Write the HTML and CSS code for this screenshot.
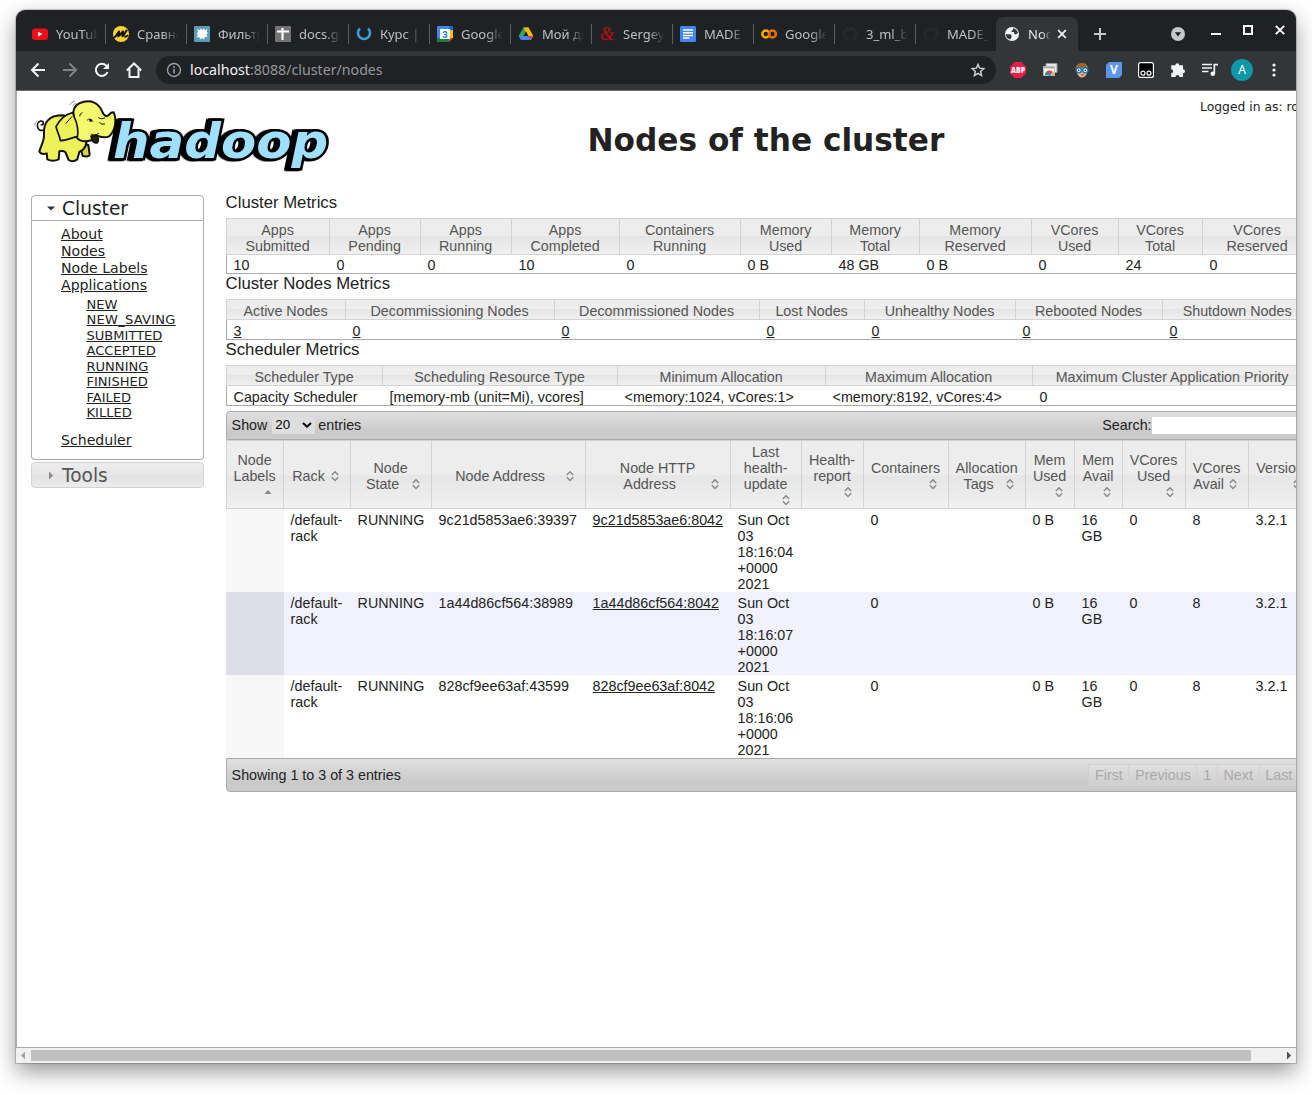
FILE: index.html
```html
<!DOCTYPE html>
<html lang="en">
<head>
<meta charset="utf-8">
<title>Nodes of the cluster</title>
<link rel="stylesheet" href="styles.css">
</head>
<body>
<div class="window">
  <div class="tabstrip">
    <div class="tab"><svg viewBox="0 0 16 16"><rect y="2.5" width="16" height="11.5" rx="3" fill="#f00d15"/><path d="M6 5.8v4.6l4.4-2.3z" fill="#fff"/></svg><span class="label">YouTube</span></div>
    <div class="tab"><svg viewBox="0 0 16 16"><circle cx="8" cy="8" r="8" fill="#fcd535"/><path d="M.8 11.500C3 11.500 4.500 6.500 6 5.500C7 6 4.500 9.500 5.300 10.300C7 10 8.500 6 10 5.300C11 6 8.500 9.500 9.500 10.300C11 10 12 6.500 14 3.800M11.500 10.500C13 11 14.300 10 15 9" fill="none" stroke="#111" stroke-width="2"/></svg><span class="label">Сравнение</span></div>
    <div class="tab"><svg viewBox="0 0 16 16"><rect width="16" height="16" rx="1" fill="#5b9bb8"/><path d="M3 3l2.500 1L7 2.500 8.500 4 10 2l.7 2.200L13.500 3l-1 2.700L14 7l-1.500 1.300L13.500 11l-2.600-.2L10 13.500 8 12l-2 1.500-.6-2.600-3 .6L4 9 2.500 7.500 4 6z" fill="#fff"/></svg><span class="label">Фильтры</span></div>
    <div class="tab"><svg viewBox="0 0 16 16"><rect width="16" height="16" rx="1" fill="#737373"/><path d="M2 5.500h12M7.500 2v12" stroke="#fff" stroke-width="2.200"/></svg><span class="label">docs.google</span></div>
    <div class="tab"><svg viewBox="0 0 16 16"><path d="M4 2.500A6 6 0 1 0 12 2.500" fill="none" stroke="#3c9bd6" stroke-width="2.600"/></svg><span class="label">Курс | ML</span></div>
    <div class="tab"><svg viewBox="0 0 16 16"><path d="M0 1a1 1 0 0 1 1-1h11v16H0z" fill="#4285f4"/><path d="M12 0h3a1 1 0 0 1 1 1v3h-4z" fill="#1967d2"/><path d="M12 4h4v8h-4z" fill="#fbbc04"/><path d="M0 12h12v4H1a1 1 0 0 1-1-1z" fill="#188038"/><path d="M12 12h4l-4 4z" fill="#ea4335"/><path d="M3 3h10v10H3z" fill="#fff"/><text x="8" y="11.500" text-anchor="middle" font-family="Roboto" font-size="9.500" font-weight="700" fill="#1a73e8">3</text></svg><span class="label">Google Cal</span></div>
    <div class="tab"><svg viewBox="0 0 16 16"><path d="M5.500 1.500h5L8 6 3.200 14 .7 10z" fill="#34a853"/><path d="M5.500 1.500h5L15.300 10h-5z" fill="#fbbc04"/><path d="M.7 10H15.300L12.800 14H3.200z" fill="#4285f4"/><path d="M10.300 10h5L12.800 14z" fill="#ea4335"/><path d="M8 5.500l2.500 4.500h-5z" fill="#202124"/></svg><span class="label">Мой диск</span></div>
    <div class="tab"><svg viewBox="0 0 16 16"><text x="8" y="13.500" text-anchor="middle" font-family="Liberation Serif" font-size="18" font-style="italic" font-weight="400" stroke="#a3121d" stroke-width=".4" fill="#a3121d">&amp;</text></svg><span class="label">Sergey N</span></div>
    <div class="tab"><svg viewBox="0 0 16 16"><rect width="16" height="16" rx="1.500" fill="#4285f4"/><path d="M3 4h10M3 6.700h10M3 9.400h10M3 12.100h6.500" stroke="#fff" stroke-width="1.500"/></svg><span class="label">MADE - doc</span></div>
    <div class="tab"><svg viewBox="0 0 16 16"><circle cx="4.800" cy="8" r="3.500" fill="none" stroke="#f9ab00" stroke-width="2.500"/><circle cx="11.400" cy="8" r="3.500" fill="none" stroke="#e8710a" stroke-width="2.500"/></svg><span class="label">Google Colab</span></div>
    <div class="tab"><svg viewBox="0 0 16 16"><circle cx="8" cy="8" r="7.600" fill="#24292e"/><path d="M6 16v-3.500C2.500 11.500 3 7 4.200 6V3.800L6.300 5h3.400l2.100-1.200V6c1.200 1 1.700 5.500-1.800 6.500V16z" fill="#202124"/></svg><span class="label">3_ml_big</span></div>
    <div class="tab last"><svg viewBox="0 0 16 16"><circle cx="8" cy="8" r="7.600" fill="#24292e"/><path d="M6 16v-3.500C2.500 11.500 3 7 4.200 6V3.800L6.300 5h3.400l2.100-1.200V6c1.200 1 1.700 5.500-1.800 6.500V16z" fill="#202124"/></svg><span class="label">MADE_2021</span></div>
    <div class="tab active"><svg viewBox="0 0 16 16"><circle cx="8" cy="8" r="7" fill="#f1f3f4"/><path d="M1.800 8.300H5.500Q8 8.500 7.500 11L6.300 13.500Q2 12.500 1.800 8.300zM9 2.200Q13 3 14 7L11.500 8.500Q9.500 7.500 10 6H7.500Q7 4 9 4z" fill="#35363a"/></svg><span class="label">Nodes of</span><svg class="tab-close" viewBox="0 0 16 16"><path d="M4.200 4.200l7.600 7.600m0-7.600l-7.600 7.600" stroke="#f1f3f4" stroke-width="1.800"/></svg></div>
    <svg class="newtab" viewBox="0 0 16 16"><path d="M8 2v12M2 8h12" stroke="#c6c9cc" stroke-width="2"/></svg>
    <div class="controls">
      <svg viewBox="0 0 16 16" class="low"><circle cx="8" cy="8" r="7" fill="#c6c8cb"/><path d="M4.800 6.200h6.400L8 10.500z" fill="#202124"/></svg>
      <svg viewBox="0 0 16 16"><path d="M3 12h10" stroke="#fff" stroke-width="2"/></svg>
      <svg viewBox="0 0 16 16"><path d="M4 4h8v8H4z" fill="none" stroke="#fff" stroke-width="2"/></svg>
      <svg viewBox="0 0 16 16"><path d="M3.800 3.800l8.400 8.400m0-8.400l-8.400 8.400" stroke="#fff" stroke-width="1.900"/></svg>
    </div>
  </div>
  <div class="toolbar">
    <span class="btn"><svg viewBox="0 0 16 16"><path d="M15 8H2.500M8.500 1.500L2 8l6.500 6.500" fill="none" stroke="#f1f3f4" stroke-width="2"/></svg></span>
    <span class="btn"><svg viewBox="0 0 16 16"><path d="M1 8h12.500M7.500 1.500L14 8l-6.500 6.500" fill="none" stroke="#818487" stroke-width="2"/></svg></span>
    <span class="btn"><svg viewBox="0 0 16 16"><path d="M13.500 10A6 6 0 1 1 12.300 3.800L14 5.500" fill="none" stroke="#f1f3f4" stroke-width="2"/><path d="M15 1v6H9z" fill="#f1f3f4"/></svg></span>
    <span class="btn"><svg viewBox="0 0 16 16"><path d="M.8 8.500L8 1.500l7.200 7M3.500 7v8h9V7" fill="none" stroke="#f1f3f4" stroke-width="2"/></svg></span>
    <div class="omnibox">
      <svg viewBox="0 0 16 16"><circle cx="8" cy="8" r="6.500" fill="none" stroke="#9aa0a6" stroke-width="1.400"/><path d="M8 7v4.500M8 4.300v1.600" stroke="#9aa0a6" stroke-width="1.600"/></svg>
      <span class="url"><b>localhost</b>:8088/cluster/nodes</span>
      <svg viewBox="0 0 16 16"><path d="M8 2.300l1.600 3.900 4.200.4-3.200 2.800 1 4.100L8 11.300l-3.600 2.200 1-4.100L2.200 6.600l4.200-.4z" fill="none" stroke="#d0d3d6" stroke-width="1.400"/></svg>
    </div>
    <span class="btn"><svg viewBox="0 0 16 16"><path d="M4.700 0h6.600L16 4.700v6.600L11.300 16H4.700L0 11.300V4.700z" fill="#ec1e45"/><text x="1" y="10.900" font-family="Open Sans" font-size="8" font-weight="800" fill="#fff" textLength="14" lengthAdjust="spacingAndGlyphs">ABP</text></svg></span>
    <span class="btn"><svg viewBox="0 0 16 16"><path d="M4 1.500h11v9H4z" fill="#e8e8e8" stroke="#999"/><path d="M1.500 4.500h11v9h-11z" fill="#fafafa" stroke="#bbb"/><path d="M2 5h10v1.500H2z" fill="#aaa"/><path d="M3 13a4.500 4.500 0 0 1 9 0z" fill="#e44134"/><path d="M3 13a4.500 4.500 0 0 1 2-3.500L7.500 13z" fill="#26a35a"/><path d="M12 13a4.500 4.500 0 0 0-1.500-3L8 13z" fill="#fbc116"/><circle cx="7.500" cy="12.200" r="1.700" fill="#4285f4"/></svg></span>
    <span class="btn"><svg viewBox="0 0 16 16"><path d="M1.500 8C1 3 4 1 8 1s6.500 2 6 7z" fill="#a0651f"/><path d="M3 6h10v5c-1 3-3 4.500-5 4.500S4 14 3 11z" fill="#f0b184"/><path d="M7 13h3" stroke="#a33"/><circle cx="4.800" cy="8.200" r="2.500" fill="#fff" stroke="#1979ca" stroke-width="1.500"/><circle cx="11.200" cy="8.200" r="2.500" fill="#fff" stroke="#1979ca" stroke-width="1.500"/><circle cx="4.800" cy="8.200" r=".7"/><circle cx="11.200" cy="8.200" r=".7"/></svg></span>
    <span class="btn"><svg viewBox="0 0 16 16"><path d="M3 0h13v13l-3 3H0V3z" fill="#5b97e8"/><text x="8" y="12.200" text-anchor="middle" font-family="Open Sans" font-size="12" font-weight="700" fill="#fff">V</text></svg></span>
    <span class="btn"><svg viewBox="0 0 16 16"><rect x=".6" y=".6" width="14.800" height="14.800" rx="2" fill="#000" stroke="#fff" stroke-width="1.200"/><circle cx="5" cy="11.200" r="2" fill="none" stroke="#fff" stroke-width="1.200"/><circle cx="11" cy="11.200" r="2" fill="none" stroke="#fff" stroke-width="1.200"/></svg></span>
    <span class="btn"><svg viewBox="0 0 16 16"><path d="M1.200 3.200h4.100a2 2 0 1 1 4 0H13v4a2 2 0 1 1 0 4V15H9.500a2 2 0 1 0-4 0H1.200v-3.800a2 2 0 1 0 0-4z" fill="#f1f3f4"/></svg></span>
    <span class="btn"><svg viewBox="0 0 16 16"><path d="M0 2.500h10M0 6h10M0 9.500h6.500" stroke="#f1f3f4" stroke-width="1.500"/><path d="M12.300 12V2.700H16" fill="none" stroke="#f1f3f4" stroke-width="1.700"/><circle cx="10.800" cy="11.800" r="2.300" fill="#f1f3f4"/></svg></span>
    <span class="btn"><span class="avatar">A</span></span>
    <span class="btn"><svg viewBox="0 0 16 16"><circle cx="8" cy="3" r="1.600" fill="#f1f3f4"/><circle cx="8" cy="8" r="1.600" fill="#f1f3f4"/><circle cx="8" cy="13" r="1.600" fill="#f1f3f4"/></svg></span>
  </div>

  <div class="page">
    <div class="header">
      <svg class="logo" viewBox="3 3 987 267">
        <g stroke="#111" stroke-width="6" stroke-linejoin="round" stroke-linecap="round">
          <path d="M84 120C62 128 58 98 74 93C84 92 84 104 76 105" fill="none" stroke-width="5"/>
          <path d="M190 160L200 198Q220 202 221 194L217 165z" fill="#d3d83b"/>
          <path d="M140 76C100 76 82 96 84 130C86 150 78 160 70 184Q76 196 92 190L94 208Q110 216 128 208L130 184Q142 182 148 186L158 210Q170 218 184 208L190 186C208 178 214 160 210 146L200 90z" fill="#edf15a"/>
          <path d="M172 66C176 34 226 22 250 50C260 60 258 74 270 78C282 80 278 66 293 67C302 88 300 122 278 140C264 146 252 140 238 136L228 150C200 160 180 150 178 130z" fill="#f4f86c"/>
          <path d="M225 138Q228 162 244 158Q250 150 243 137z" fill="#2b240a" stroke-width="5"/>
          <path d="M170 68C146 74 134 86 120 110C124 128 132 138 133 152C150 152 170 142 184 140C188 126 184 100 176 84z" fill="#edf15a" stroke-width="5"/>
          <path d="M150 100Q160 88 168 80M191 78Q192 70 198 68M214 90Q222 82 230 94M248 84Q256 90 266 84M251 98Q257 106 266 102M226 132Q236 140 248 130" fill="none" stroke-width="3"/>
          <path d="M162 44Q166 34 176 34M170 48Q172 42 180 40M56 106Q56 96 62 94" fill="none" stroke="#666" stroke-width="2"/>
          <ellipse cx="224" cy="91" rx="4" ry="5" fill="#111" stroke="none"/>
        </g>
        <text class="wordmark" x="291" y="204" textLength="646" lengthAdjust="spacingAndGlyphs">hadoop</text>
      </svg>
      <h1>Nodes of the cluster</h1>
      <div class="user">Logged in as: root</div>
    </div>
    <div class="main">
      <div class="nav">
        <h3 class="nav-head"><i class="tri down"></i>Cluster</h3>
        <div class="nav-body">
          <a>About</a><a>Nodes</a><a>Node Labels</a><a>Applications</a>
          <div class="sub"><a>NEW</a><a class="wide">NEW_SAVING</a><a>SUBMITTED</a><a>ACCEPTED</a><a>RUNNING</a><a>FINISHED</a><a>FAILED</a><a>KILLED</a></div>
          <a>Scheduler</a>
        </div>
        <h3 class="nav-head closed"><i class="tri right"></i>Tools</h3>
      </div>
      <div class="content">
        <h3>Cluster Metrics</h3>
        <table class="metrics tall">
          <colgroup><col class="w104"><col class="w91"><col class="w91"><col class="w108"><col class="w121"><col class="w91"><col class="w88"><col class="w112"><col class="w87"><col class="w84"><col></colgroup>
          <tr><th>Apps<br>Submitted</th><th>Apps<br>Pending</th><th>Apps<br>Running</th><th>Apps<br>Completed</th><th>Containers<br>Running</th><th>Memory<br>Used</th><th>Memory<br>Total</th><th>Memory<br>Reserved</th><th>VCores<br>Used</th><th>VCores<br>Total</th><th>VCores<br>Reserved</th></tr>
          <tr><td>10</td><td>0</td><td>0</td><td>10</td><td>0</td><td>0 B</td><td>48 GB</td><td>0 B</td><td>0</td><td>24</td><td>0</td></tr>
        </table>
        <h3>Cluster Nodes Metrics</h3>
        <table class="metrics">
          <colgroup><col class="w120"><col class="w209"><col class="w205"><col class="w105"><col class="w151"><col class="w147"><col></colgroup>
          <tr><th>Active Nodes</th><th>Decommissioning Nodes</th><th>Decommissioned Nodes</th><th>Lost Nodes</th><th>Unhealthy Nodes</th><th>Rebooted Nodes</th><th>Shutdown Nodes</th></tr>
          <tr><td><a>3</a></td><td><a>0</a></td><td><a>0</a></td><td><a>0</a></td><td><a>0</a></td><td><a>0</a></td><td><a>0</a></td></tr>
        </table>
        <h3>Scheduler Metrics</h3>
        <table class="metrics">
          <colgroup><col class="w157"><col class="w235"><col class="w208"><col class="w207"><col></colgroup>
          <tr><th>Scheduler Type</th><th>Scheduling Resource Type</th><th>Minimum Allocation</th><th>Maximum Allocation</th><th>Maximum Cluster Application Priority</th></tr>
          <tr><td>Capacity Scheduler</td><td>[memory-mb (unit=Mi), vcores]</td><td>&lt;memory:1024, vCores:1&gt;</td><td>&lt;memory:8192, vCores:4&gt;</td><td>0</td></tr>
        </table>
        <div class="bar top">
          <span>Show</span>
          <span class="select">20<svg viewBox="0 0 10 6"><path d="M1 1l4 3.700L9 1" fill="none" stroke="#000" stroke-width="2"/></svg></span>
          <span>entries</span>
          <span class="search">Search:</span><span class="input"></span>
        </div>
        <svg class="defs"><symbol id="sort" viewBox="0 0 16 16"><path d="M4.800 7L8 3.800 11.200 7M4.800 9.300L8 12.500l3.200-3.200" fill="none" stroke="#888" stroke-width="1.400"/></symbol></svg>
        <table class="nodes">
          <colgroup><col class="w58"><col class="w67"><col class="w81"><col class="w154"><col class="w145"><col class="w71"><col class="w62"><col class="w85"><col class="w77"><col class="w49"><col class="w48"><col class="w63"><col class="w63"><col></colgroup>
          <tr>
            <th><div>Node<br>Labels<svg viewBox="0 0 16 16"><path d="M4.500 10h7L8 6z" fill="#888"/></svg></div></th>
            <th><div>Rack<svg><use href="#sort"/></svg></div></th>
            <th><div>Node<br>State<svg><use href="#sort"/></svg></div></th>
            <th><div>Node Address<svg><use href="#sort"/></svg></div></th>
            <th><div>Node HTTP<br>Address<svg><use href="#sort"/></svg></div></th>
            <th><div>Last<br>health-<br>update<svg><use href="#sort"/></svg></div></th>
            <th><div>Health-<br>report<br><svg><use href="#sort"/></svg></div></th>
            <th><div>Containers<svg><use href="#sort"/></svg></div></th>
            <th><div>Allocation<br>Tags<svg><use href="#sort"/></svg></div></th>
            <th><div>Mem<br>Used<svg><use href="#sort"/></svg></div></th>
            <th><div>Mem<br>Avail<svg><use href="#sort"/></svg></div></th>
            <th><div>VCores<br>Used<br><svg><use href="#sort"/></svg></div></th>
            <th><div>VCores<br>Avail<svg><use href="#sort"/></svg></div></th>
            <th><div>Version<svg><use href="#sort"/></svg></div></th>
          </tr>
          <tr><td></td><td>/default-<br>rack</td><td>RUNNING</td><td>9c21d5853ae6:39397</td><td><a>9c21d5853ae6:8042</a></td><td>Sun Oct<br>03<br>18:16:04<br>+0000<br>2021</td><td></td><td>0</td><td></td><td>0 B</td><td>16<br>GB</td><td>0</td><td>8</td><td>3.2.1</td></tr>
          <tr class="even"><td></td><td>/default-<br>rack</td><td>RUNNING</td><td>1a44d86cf564:38989</td><td><a>1a44d86cf564:8042</a></td><td>Sun Oct<br>03<br>18:16:07<br>+0000<br>2021</td><td></td><td>0</td><td></td><td>0 B</td><td>16<br>GB</td><td>0</td><td>8</td><td>3.2.1</td></tr>
          <tr><td></td><td>/default-<br>rack</td><td>RUNNING</td><td>828cf9ee63af:43599</td><td><a>828cf9ee63af:8042</a></td><td>Sun Oct<br>03<br>18:16:06<br>+0000<br>2021</td><td></td><td>0</td><td></td><td>0 B</td><td>16<br>GB</td><td>0</td><td>8</td><td>3.2.1</td></tr>
        </table>
        <div class="bar bottom">
          <span>Showing 1 to 3 of 3 entries</span>
          <div class="pager"><span>First</span><span>Previous</span><span>1</span><span>Next</span><span>Last</span></div>
        </div>
      </div>
    </div>
  </div>
  <div class="scrollbar"><i class="arrow left"></i><div class="thumb"></div><i class="arrow right"></i></div>
</div>
</body>
</html>
```
FILE: styles.css
```css
* { box-sizing: border-box; }
html, body { height: 100%; overflow: hidden; }
body { margin: 0; padding: 10px 16px 0; background: #fff; font-family: "Liberation Sans", Arial, sans-serif; color: #222; }
.window { display: flex; flex-direction: column; width: 1280px; height: 1053px; border-radius: 9px 9px 0 0; overflow: hidden; box-shadow: 0 0 1px 1px rgba(0,0,0,.2), 0 9px 22px rgba(0,0,0,.4); background: #fff; }

/* browser frame */
.tabstrip { display: flex; flex: none; height: 41px; padding: 7px 0 0 16px; background: #202124; font: 13px/18px "Noto Sans", sans-serif; color: #bdc1c6; }
.tab { display: flex; align-items: center; flex: none; width: 81px; height: 34px; }
.tab svg { width: 16px; height: 16px; flex: none; }
.tab .label { width: 42px; margin-left: 8px; overflow: hidden; white-space: nowrap; -webkit-mask-image: linear-gradient(90deg, #000 60%, transparent); mask-image: linear-gradient(90deg, #000 60%, transparent); }
.tab::after { content: ""; width: 1px; height: 20px; margin-left: 7px; background: #5c5f63; }
.tab.last::after, .tab.active::after { display: none; }
.tab.active { width: 82px; margin-left: -8px; padding-left: 8px; background: #323639; border-radius: 8px 8px 0 0; color: #e8eaed; }
.tab.active .label { width: 23px; }
.tab.active .tab-close { margin-left: 3px; }
.newtab { width: 16px; height: 16px; margin: 9px 0 0 14px; flex: none; }
.controls { display: flex; gap: 16px; margin-left: auto; padding: 5px 8px 0 0; }
.controls svg { width: 16px; height: 16px; }
.controls .low { margin: 4px 6px 0 0; }
.toolbar { display: flex; align-items: center; flex: none; height: 40px; padding: 0 6px 1px; background: #323639; border-bottom: 1px solid #6b6e70; }
.btn { display: flex; justify-content: center; align-items: center; width: 32px; flex: none; }
.btn svg { width: 16px; height: 16px; }
.omnibox { display: flex; align-items: center; width: 840px; height: 28px; margin: 0 6px; padding: 0 10px; border-radius: 14px; background: #202124; flex: none; }
.omnibox svg { width: 16px; height: 16px; flex: none; }
.url { flex: 1; margin-left: 8px; font: 14.200px/20px "Noto Sans", sans-serif; color: #94989c; }
.url b { font-weight: 400; color: #f1f3f4; }
.avatar { width: 22px; height: 22px; border-radius: 50%; background: #0d97a7; color: #fff; font: 12px/22px "Noto Sans", sans-serif; text-align: center; }

/* page */
.page { flex: 1; min-height: 0; overflow: hidden; border-left: 1px solid #aaa; }
.header { display: flex; height: 102px; white-space: nowrap; }
.logo { width: 329px; height: 89px; flex: none; }
.wordmark { font: italic 700 146px "DejaVu Sans", sans-serif; fill: #9fdfff; stroke: #000; stroke-width: 15px; paint-order: stroke; stroke-linejoin: miter; stroke-miterlimit: 3; filter: drop-shadow(-6px 1px 0 #000) drop-shadow(-6px 0 0 #000); }
h1 { width: 357px; margin: 30px 0 0 241.500px; flex: none; font: 700 31.200px/38px "DejaVu Sans", sans-serif; }
.user { margin: 9px 0 0 255.500px; font: 12.350px/15px "DejaVu Sans", sans-serif; }
.main { display: flex; }
.nav { width: 173px; margin: 2px 21.600px 0 14px; flex: none; font: 14.100px/17px "DejaVu Sans", sans-serif; }
.nav-head { display: flex; align-items: center; height: 26px; margin: 0; padding-top: 1px; border: 1px solid #aaa; border-radius: 4px 4px 0 0; font: 18.600px/24px "DejaVu Sans", sans-serif; }
.nav-head.closed { margin-top: 2px; border-color: #d3d3d3; border-radius: 4px; color: #555; background: linear-gradient(#ededed, #e6e6e6 50%, #e2e2e2 51%, #ececec); }
.tri { width: 8px; height: 8px; margin: 0 7px 0 15px; }
.tri.down { background: #333; clip-path: polygon(0 2px, 100% 2px, 50% 6px); }
.tri.right { background: #888; clip-path: polygon(2px 0, 6px 50%, 2px 100%); }
.nav-body { display: flex; flex-direction: column; height: 239px; padding: 5px 0 0 29px; border: 1px solid #aaa; border-top: 0; border-radius: 0 0 4px 4px; }
a { text-decoration: underline; }
.nav a { align-self: flex-start; }
.sub { display: flex; flex-direction: column; margin: 3px 0 11px 25.500px; font-size: 13.050px; line-height: 15.430px; }
.sub .wide { letter-spacing: .25px; }
.content { width: 1087.400px; flex: none; font-size: 14.300px; line-height: 16px; }
.content h3 { height: 25px; margin: 0; font-weight: 400; font-size: 16.730px; line-height: 19px; }
table { width: 1087px; table-layout: fixed; border-collapse: separate; border-spacing: 0; }
th { padding: 3px 0 0; border: 1px solid #d3d3d3; border-left: 0; font-weight: 400; color: #555; background: linear-gradient(#ededed 0 48%, #e5e5e5 50%, #f0f0f0); text-align: center; }
th:first-child { border-left: 1px solid #d3d3d3; }
td { padding: 3px 0 0 7px; white-space: nowrap; vertical-align: top; }
.metrics td { border-bottom: 1px solid #aaa; }
.metrics td:first-child { border-left: 1px solid #aaa; }
.tall td { padding-top: 2px; }
.bar { display: flex; align-items: center; border: 1px solid #aaa; background: linear-gradient(#e0e0e0, #c9c9c9 75%, #cbcbcb); white-space: nowrap; padding-left: 5px; }
.bar.top { height: 29px; margin-top: 5px; padding-bottom: 1px; border-radius: 4px 4px 0 0; }
.bar.bottom { height: 34px; border-radius: 0 0 4px 4px; }
.select { display: flex; align-items: center; justify-content: space-between; width: 43px; height: 17px; margin: 0 3px 0 5px; padding: 0 3px; background: #dedede; color: #000; font-size: 13.330px; }
.select svg { width: 10px; height: 6px; }
.search { width: 50px; margin-left: 741px; }
.input { flex: 1; height: 17px; background: #fff; }
.defs { display: none; }
.nodes th { height: 69px; padding: 3px 7px 0; background: linear-gradient(#ededed 0 50%, #e6e6e6 52%, #f0f0f0); }
.nodes th div { display: flow-root; margin: 0 -.500px; }
.nodes th svg { float: right; width: 16px; height: 16px; }
.nodes td { height: 83px; }
.nodes td:first-child { background: #f7f7f7; }
.even td { background: #f2f2ff; }
.nodes .even td:first-child { background: #dedee8; }
.pager { display: flex; margin-left: auto; margin-right: 14px; color: #aaa; }
.pager span { height: 22px; padding: 2px 5.700px; border: 1px solid #d1d1d1; border-right: 0; background: rgba(255,255,255,.15); }
.w104 { width: 104px } .w91 { width: 91px } .w108 { width: 108px } .w121 { width: 121px } .w88 { width: 88px } .w112 { width: 112px } .w87 { width: 87px } .w84 { width: 84px }
.w120 { width: 120px } .w209 { width: 209px } .w205 { width: 205px } .w105 { width: 105px } .w151 { width: 151px } .w147 { width: 147px }
.w157 { width: 157px } .w235 { width: 235px } .w208 { width: 208px } .w207 { width: 207px }
.w58 { width: 58px } .w67 { width: 67px } .w81 { width: 81px } .w154 { width: 154px } .w145 { width: 145px } .w71 { width: 71px } .w62 { width: 62px } .w85 { width: 85px } .w77 { width: 77px } .w49 { width: 49px } .w48 { width: 48px } .w63 { width: 63px }
.scrollbar { display: flex; align-items: center; flex: none; height: 16px; border-top: 1px solid #aaa; background: #f1f1f1; }
.thumb { width: 1220px; height: 11px; background: #c1c1c1; }
.arrow { width: 15px; height: 8px; }
.arrow.left { background: #a3a3a3; clip-path: polygon(9px 0, 5px 50%, 9px 100%); }
.arrow.right { margin-left: auto; background: #505050; clip-path: polygon(6px 0, 10px 50%, 6px 100%); }
```
